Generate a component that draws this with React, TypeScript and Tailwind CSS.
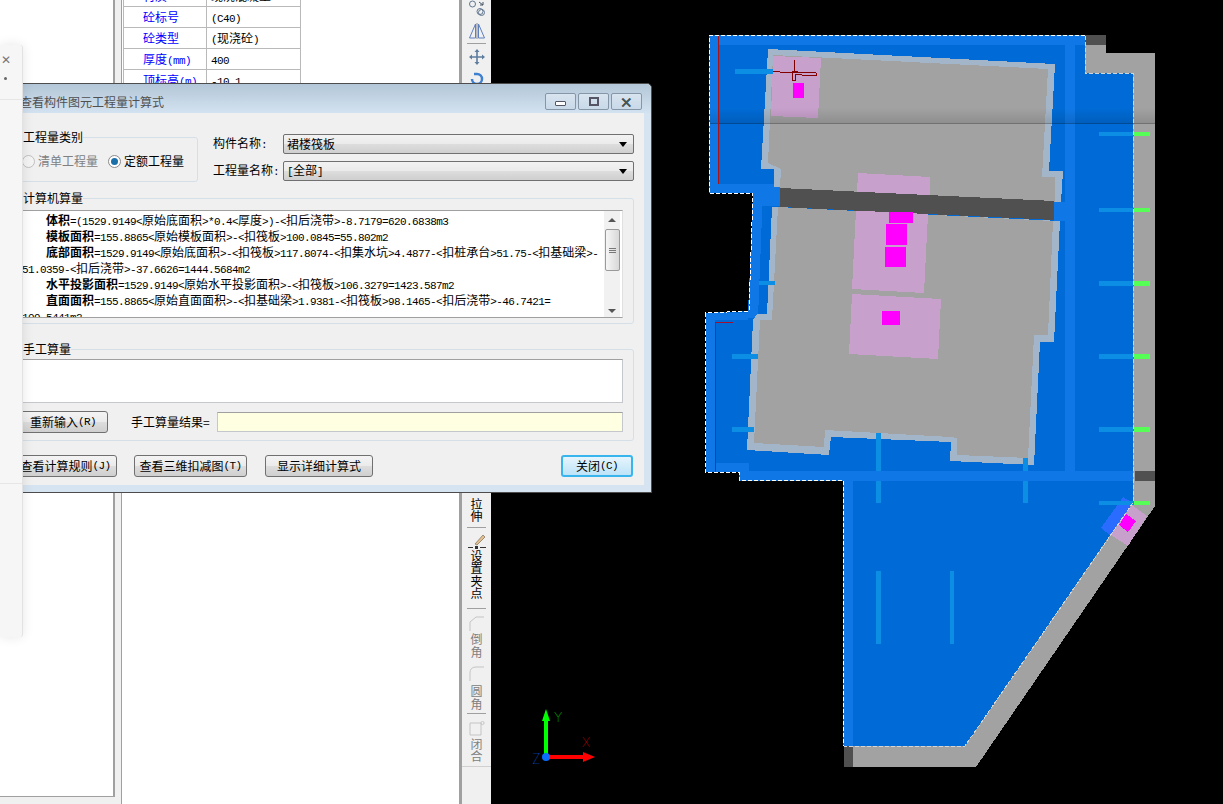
const cjk = "font-['Noto_Sans_CJK_SC',sans-serif]";

// digits and latin are half width in the original bitmap font
function Mixed({ text }: { text: string }) {
  return (
    <>
      {text.split(/([\x00-\x7f]+)/).map((part, i) =>
        /^[\x00-\x7f]+$/.test(part) ? (
          <span key={i} className="font-['Liberation_Mono',monospace] text-[11px] tracking-[-0.6px]">
            {part}
          </span>
        ) : (
          <span key={i}>{part}</span>
        ),
      )}
    </>
  );
}

function CalcLine({ label, text, indent = true }: { label?: string; text: string; indent?: boolean }) {
  return (
    <div className={indent ? 'h-4 whitespace-nowrap pl-6 leading-4' : 'h-4 whitespace-nowrap leading-4'}>
      {label && <b className="font-bold">{label}</b>}
      <Mixed text={text} />
    </div>
  );
}

function DialogButton({ children, width }: { children: React.ReactNode; width: string }) {
  return (
    <div
      className={`flex h-[22px] items-center justify-center rounded-[3px] border border-[#707070] bg-[linear-gradient(#f4f4f4_0%,#ebebeb_48%,#dddddd_52%,#cfcfcf_100%)] text-[12px] text-black ${width}`}
    >
      {children}
    </div>
  );
}

function ComboBox({ value }: { value: React.ReactNode }) {
  return (
    <div className="flex h-5 w-[351px] items-center justify-between rounded-[2px] border border-[#707070] bg-[linear-gradient(#f2f2f2_0%,#ebebeb_48%,#dddddd_52%,#cfcfcf_100%)] pl-[3px] pr-[6px] text-[12px] text-black">
      <span>{value}</span>
      <span className="h-0 w-0 border-x-[4px] border-t-[5px] border-x-transparent border-t-black" />
    </div>
  );
}

function WindowButton({ children }: { children: React.ReactNode }) {
  return (
    <div className="flex h-[17px] w-[31px] items-center justify-center rounded-[2px] border border-[#8496a8] bg-[linear-gradient(#d8e4ef,#c9d9e8)]">
      {children}
    </div>
  );
}

function PropRow({ label, value }: { label: React.ReactNode; value: React.ReactNode }) {
  return (
    <div className="grid h-[21px] grid-cols-[83px_94px] border-b border-[#b9b9b9] text-[12px] leading-[20px]">
      <div className="border-r border-[#b9b9b9] pl-[19px] text-[#0000ff]">{label}</div>
      <div className="pl-1 text-black">{value}</div>
    </div>
  );
}

function Sep() {
  return <div className="my-[2px] h-px w-[19px] shrink-0 bg-[#a0a0a0]" />;
}

function VText({ chars, muted }: { chars: string[]; muted?: boolean }) {
  return (
    <div className={`flex flex-col items-center text-[12px] leading-[12.4px] ${muted ? 'text-[#808080]' : 'text-black'}`}>
      {chars.map((c) => (
        <span key={c}>{c}</span>
      ))}
    </div>
  );
}

function Toolbar() {
  return (
    <div className="flex w-[29px] shrink-0 flex-col items-center bg-[#f0f0f0]">
      <svg width="18" height="18" viewBox="0 0 18 18" className="mt-0 shrink-0" fill="none" stroke="#5f7590">
        <circle cx="4.5" cy="4" r="3" />
        <circle cx="12" cy="11.5" r="3" />
        <circle cx="13.5" cy="12.5" r="3" />
        <path d="M11 2l4 3M15 2v3h-3" stroke="#456" />
      </svg>
      <svg width="18" height="16" viewBox="0 0 18 16" className="mt-[5px] shrink-0" fill="none" stroke="#5d7fc0">
        <path d="M7.5 1v14H1.5zM10.5 1v14h6z" />
        <path d="M9 0v16" stroke="#888" />
      </svg>
      <div className="mt-[4px] h-px w-[19px] shrink-0 bg-[#a0a0a0]" />
      <svg width="16" height="16" viewBox="0 0 16 16" className="mt-[5px] shrink-0" fill="#5e7d9e">
        <path d="M7.2 3h1.6v4.2H13V5.5L16 8l-3 2.5V8.8H8.8V13h1.7L8 16l-2.500-3h1.700V8.800H3v1.700L0 8l3-2.500v1.700h4.200V3H5.500L8 0l2.500 3z" />
      </svg>
      <svg width="14" height="16" viewBox="0 0 14 16" className="mt-[6px] shrink-0" fill="none" stroke="#3f7fd0" strokeWidth="2.500">
        <path d="M2 8a5 5 0 1 0 5-5H4" />
      </svg>
      <div className="h-[402px] shrink-0" />
      <div className="h-[4px] w-[13px] shrink-0 bg-[#5b7fa5]" />
      <div className="mt-[5px]">
        <VText chars={['拉', '伸']} />
      </div>
      <div className="mt-[2px]">
        <Sep />
      </div>
      <svg width="18" height="16" viewBox="0 0 18 16" className="mt-[3px] shrink-0" fill="none">
        <path d="M7 11l8-9 2 2-8 8z" fill="#e3c08d" stroke="#8a7b62" strokeWidth="0.800" />
        <path d="M0 14.500h5M12 14.500h6" stroke="#333" />
        <rect x="7" y="13" width="3" height="3" fill="#333" />
      </svg>
      <div className="mt-[1px]">
        <VText chars={['设', '置', '夹', '点']} />
      </div>
      <div className="mt-[7px]">
        <Sep />
      </div>
      <svg width="16" height="15" viewBox="0 0 16 15" className="mt-[5px] shrink-0" fill="none" stroke="#c4c4c4">
        <path d="M1 15V6M15 1H7M1 6l6-5" />
      </svg>
      <div className="mt-[2px]">
        <VText chars={['倒', '角']} muted />
      </div>
      <svg width="16" height="15" viewBox="0 0 16 15" className="mt-[8px] shrink-0" fill="none" stroke="#c4c4c4">
        <path d="M1 15V7Q1 1 7 1h8" />
      </svg>
      <div className="mt-[4px]">
        <VText chars={['圆', '角']} muted />
      </div>
      <div className="mt-[1px]">
        <Sep />
      </div>
      <svg width="16" height="15" viewBox="0 0 16 15" className="mt-[5px] shrink-0" fill="none" stroke="#c4c4c4">
        <path d="M1 2h11v12H1z" />
        <circle cx="13.500" cy="2" r="1.600" />
      </svg>
      <div className="mt-[2px]">
        <VText chars={['闭', '合']} muted />
      </div>
      <div className="mt-[3px] h-px w-full shrink-0 bg-[#d0d0d0]" />
    </div>
  );
}

function Drawing() {
  const lightBlue = '#0f78e6';
  const tick = '#0c8ee5';
  return (
    <svg viewBox="491 0 732 804" className="block h-full w-full" shapeRendering="crispEdges">
      <defs>
        <linearGradient id="shade" x1="0" y1="0" x2="0" y2="1">
          <stop offset="0" stopColor="#000" stopOpacity="0" />
          <stop offset="1" stopColor="#000" stopOpacity="0.12" />
        </linearGradient>
      </defs>

      {/* gray outer wall */}
      <polygon points="1085,35 1106,35 1106,53 1155,53 1155,506 976,767 844,767 844,740 1085,100" fill="#a2a2a2" />
      <rect x="1085" y="35" width="21" height="10" fill="#505050" />
      <rect x="1135" y="471" width="20" height="10" fill="#505050" />
      <rect x="844" y="746" width="9" height="21" fill="#505050" />

      {/* slab */}
      <polygon
        points="709,35 1085,35 1085,73 1133,73 1133,502 965,746 844,746 844,481 739,481 739,472 706,472 706,313 748,311 753,202 754,193 709,193"
        fill="#006bd6"
      />

      {/* thicker strips */}
      <g fill={lightBlue}>
        <rect x="709" y="35" width="376" height="10" />
        <rect x="709" y="35" width="10" height="158" />
        <rect x="709" y="184" width="71" height="9" />
        <rect x="754" y="187" width="26" height="19" />
        <polygon points="753,190 763,190 758,318 748,318" />
        <rect x="1065" y="45" width="10" height="426" />
        <rect x="1054" y="202" width="11" height="19" />
        <rect x="739" y="471" width="394" height="10" />
        <rect x="706" y="313" width="9" height="159" />
        <rect x="706" y="313" width="42" height="7" />
        <rect x="706" y="463" width="43" height="9" />
        <rect x="843" y="481" width="10" height="265" />
      </g>

      {/* rafts */}
      <polygon points="768,49 1055,64 1049,171 1063,171 1061,202 774,187 774,169 761,169" fill="#a3b6c9" />
      <polygon points="772,207 1060,221 1054,342 1040,342 1034,465 950,461 951,442 831,437 829,455 747,450 753,320 757,314 767,314" fill="#a3b6c9" />
      <polygon points="773,55 1048,69 1042,177 1055,177 1055,202 780,188 781,169 768,163" fill="#a2a2a2" />
      <polygon points="778,207 1053,221 1048,335 1034,335 1028,458 957,455 957,438 951,437 825,430 824,447 754,443 760,320 772,320" fill="#a2a2a2" />

      {/* pits */}
      <g fill="#c8a0cc">
        <polygon points="773,56 821,58 818,118 771,116" />
        <polygon points="858,173 930,177 930,197 857,193" />
        <polygon points="856,210 928,214 924,293 852,289" />
        <polygon points="852,294 941,299 938,359 849,354" />
        <polygon points="1132,505 1147,516 1128,546 1111,535" />
      </g>
      <polygon points="780,188 1054,201 1054,220 780,207" fill="#505050" />
      <g fill="#ff00ff">
        <rect x="793" y="83" width="11" height="15" />
        <rect x="889" y="212" width="24" height="11" />
        <rect x="886" y="224" width="21" height="21" />
        <rect x="885" y="247" width="21" height="20" />
        <rect x="882" y="311" width="18" height="14" />
      </g>
      <polygon points="1123,497 1133,503 1110,535 1101,528" fill="#2a6cff" />
      <polygon points="1126,514 1136,521 1128,532 1119,525" fill="#ff00ff" />

      {/* ticks */}
      <g fill={tick}>
        <rect x="735" y="69" width="38" height="5" />
        <rect x="759" y="281" width="16" height="4" />
        <rect x="732" y="354" width="26" height="5" />
        <rect x="732" y="427" width="22" height="5" />
        <rect x="876" y="433" width="5" height="38" />
        <rect x="876" y="481" width="5" height="22" />
        <rect x="1023" y="458" width="5" height="13" />
        <rect x="1023" y="481" width="5" height="22" />
        <rect x="876" y="571" width="5" height="73" />
        <rect x="950" y="571" width="4" height="73" />
        <rect x="1099" y="132" width="35" height="4" />
        <rect x="1099" y="208" width="35" height="4" />
        <rect x="1099" y="281" width="35" height="5" />
        <rect x="1099" y="354" width="35" height="5" />
        <rect x="1099" y="427" width="35" height="5" />
        <rect x="1099" y="501" width="35" height="4" />
      </g>
      <g fill="#55ff55">
        <rect x="1134" y="132" width="16" height="4" />
        <rect x="1134" y="208" width="16" height="4" />
        <rect x="1134" y="281" width="16" height="5" />
        <rect x="1134" y="354" width="16" height="5" />
        <rect x="1134" y="427" width="16" height="5" />
        <rect x="1134" y="501" width="16" height="4" />
      </g>

      {/* section shading */}
      <rect x="709" y="108" width="446" height="15" fill="url(#shade)" />
      <rect x="709" y="123" width="446" height="1" fill="#000" fillOpacity="0.3" />

      {/* selection outline */}
      <polyline
        points="1085,35.500 709.500,35.500 709.500,193.500 753,193.500 749,311 705.500,313 705.500,472 739,472 739,480.500 843.500,480.500 843.500,746"
        fill="none"
        stroke="#fff"
        strokeDasharray="4 2"
      />
      <polyline
        points="1085,35.500 1085,73.500 1133.500,73.500 1133.500,502 965,746 844,746"
        fill="none"
        stroke="#d5d5d5"
        strokeDasharray="4 2"
      />

      {/* red lines */}
      <path d="M718.500 36v148" stroke="#b01010" />
      <path d="M715.500 322v150M715 322.500h18" stroke="#a01030" />
      <path
        d="M773 71.500h7M780 72.500h36M816 72.500v3M802 75.500h14M795 74.500h7M795.500 74.500v6M792.500 71v10M792.500 80.500h3M794.500 60v11M792 71.500h6"
        stroke="#800000"
        fill="none"
      />

      {/* axes */}
      <g shapeRendering="auto">
        <rect x="544" y="721" width="4" height="36" fill="#00ff00" />
        <polygon points="546,709 550,721 542,721" fill="#00ff00" />
        <rect x="546" y="755" width="38" height="4" fill="#ff0000" />
        <polygon points="595,757 583,752 583,762" fill="#ff0000" />
        <circle cx="546" cy="757" r="4" fill="#0a6cff" />
        <text x="554" y="722" fontSize="13" fontWeight="100" fill="#00ff00" className="font-['Inter',sans-serif]">Y</text>
        <text x="582" y="747" fontSize="13" fontWeight="100" fill="#ff0000" className="font-['Inter',sans-serif]">X</text>
        <text x="532" y="764" fontSize="14" fontWeight="100" fill="#0a6cff" className="font-['Inter',sans-serif]">Z</text>
      </g>
    </svg>
  );
}

function CalcDialog() {
  return (
    <div className="absolute left-0 top-[83px] z-10 flex h-[410px] w-[652px] flex-col rounded-tr-[5px] border border-[#4d4d4d] bg-[#d6e4f1]">
      {/* TITLE */}
      <div className="flex h-[29px] shrink-0 items-start justify-between rounded-tr-[5px] bg-[linear-gradient(#b3c7d8,#d3e2f0)] pl-[19px] pr-[9px]">
        <span className="mt-[10px] text-[12px] leading-4 text-[#505050]">查看构件图元工程量计算式</span>
        <div className="mt-[9px] flex gap-[2px]">
          <WindowButton>
            <span className="mt-[4px] h-[5px] w-[11px] rounded-[1px] border border-[#556] bg-white" />
          </WindowButton>
          <WindowButton>
            <span className="h-[9px] w-[10px] border-2 border-[#556]" />
          </WindowButton>
          <WindowButton>
            <span className="text-[15px] font-bold leading-none text-[#455] [text-shadow:0_0_1px_#fff]">✕</span>
          </WindowButton>
        </div>
      </div>

      {/* BODY */}
      <div className="mr-[7px] flex h-[372px] shrink-0 flex-col bg-[#f0f0f0] pl-2 pr-[10px] pt-[17px] text-[12px] text-black">
        <div className="flex">
          <fieldset className="h-[52px] w-[190px] rounded-[3px] border border-[#d5dfe8]">
            <legend className="ml-[13px] h-[14px] text-[12px] leading-[14px]">工程量类别</legend>
            <div className="ml-[12px] mt-[8px] flex items-center">
              <span className="h-[13px] w-[13px] rounded-full border border-[#c0c0c0] bg-[#f4f4f4]" />
              <span className="ml-[3px] text-[#808080]">清单工程量</span>
              <span className="ml-[10px] flex h-[13px] w-[13px] items-center justify-center rounded-full border border-[#8a8a8a] bg-white">
                <span className="h-[7px] w-[7px] rounded-full bg-[#1a6fa8]" />
              </span>
              <span className="ml-[3px]">定额工程量</span>
            </div>
          </fieldset>
          <div className="ml-[15px] flex flex-col gap-[7px] pt-1">
            <div className="flex items-center">
              <span className="w-[70px]">
                构件名称<Mixed text=":" />
              </span>
              <ComboBox value="裙楼筏板" />
            </div>
            <div className="flex items-center">
              <span className="w-[70px]">
                工程量名称<Mixed text=":" />
              </span>
              <ComboBox value={<Mixed text="[全部]" />} />
            </div>
          </div>
        </div>

        <fieldset className="mt-[9px] h-[133px] rounded-[3px] border border-[#d5dfe8]">
          <legend className="ml-[13px] h-[14px] text-[12px] leading-[14px]">计算机算量</legend>
          <div className="relative ml-[5px] mr-[10px] mt-[5px] h-[108px] overflow-hidden border-y border-y-[#a0a0a0] border-r border-r-[#e0e0e0] bg-white pl-[7px] pt-[1px] text-[12px]">
            <CalcLine label="体积" text="=(1529.9149<原始底面积>*0.4<厚度>)-<扣后浇带>-8.7179=620.6838m3" />
            <CalcLine label="模板面积" text="=155.8865<原始模板面积>-<扣筏板>100.0845=55.802m2" />
            <CalcLine label="底部面积" text="=1529.9149<原始底面积>-<扣筏板>117.8074-<扣集水坑>4.4877-<扣桩承台>51.75-<扣基础梁>-" />
            <CalcLine indent={false} text="51.0359-<扣后浇带>-37.6626=1444.5684m2" />
            <CalcLine label="水平投影面积" text="=1529.9149<原始水平投影面积>-<扣筏板>106.3279=1423.587m2" />
            <CalcLine label="直面面积" text="=155.8865<原始直面面积>-<扣基础梁>1.9381-<扣筏板>98.1465-<扣后浇带>-46.7421=" />
            <CalcLine indent={false} text="109.5441m2" />
            {/* SCROLLBAR */}
            <div className="absolute bottom-0 right-[2px] top-0 flex w-4 flex-col items-center bg-[#f1f1f1]">
              <span className="mt-[7px] h-0 w-0 border-x-[4px] border-b-[4px] border-x-transparent border-b-[#555]" />
              <div className="mt-[7px] flex h-[42px] w-[15px] flex-col items-center justify-center gap-px rounded-[2px] border border-[#9a9a9a] bg-[linear-gradient(90deg,#f6f6f6,#d8d8d8)]">
                <span className="h-px w-[7px] bg-[#777]" />
                <span className="h-px w-[7px] bg-[#777]" />
                <span className="h-px w-[7px] bg-[#777]" />
              </div>
              <span className="mt-auto mb-[4px] h-0 w-0 border-x-[4px] border-t-[4px] border-x-transparent border-t-[#555]" />
            </div>
          </div>
        </fieldset>

        <fieldset className="mt-[18px] h-[99px] rounded-[3px] border border-[#d5dfe8]">
          <legend className="ml-[13px] h-[14px] text-[12px] leading-[14px]">手工算量</legend>
          <div className="ml-[5px] mr-[10px] mt-[3px] h-[44px] border border-[#c4c8cc] border-t-[#a0a0a0] bg-white" />
          <div className="ml-[8px] mr-[10px] mt-2 flex items-center">
            <DialogButton width="w-[90px]">
              重新输入<Mixed text=" (R)" />
            </DialogButton>
            <span className="ml-[23px] w-[86px]">手工算量结果=</span>
            <div className="h-[20px] flex-1 border border-[#c4c8cc] border-t-[#a0a0a0] bg-[#ffffe1]" />
          </div>
        </fieldset>

        <div className="ml-[5px] mt-[14px] flex gap-[17px]">
          <DialogButton width="w-[103px]">
            查看计算规则<Mixed text=" (J)" />
          </DialogButton>
          <DialogButton width="w-[113px]">
            查看三维扣减图<Mixed text=" (T)" />
          </DialogButton>
          <DialogButton width="ml-px w-[108px]">显示详细计算式</DialogButton>
          <div className="ml-auto mr-px flex h-[22px] w-[72px] items-center justify-center rounded-[3px] border-2 border-[#39b5ee] bg-[linear-gradient(#e6f5fd,#bde3f8)]">
            关闭<Mixed text=" (C)" />
          </div>
        </div>
      </div>
    </div>
  );
}

export default function App() {
  return (
    <div className={`relative flex h-[804px] w-[1223px] overflow-hidden bg-[#f0f0f0] ${cjk}`}>
      {/* LEFT TREE */}
      <div className="flex w-[121px] shrink-0 flex-col">
        <div className="flex h-[797px] shrink-0">
          <div className="w-[113px] border-b border-[#a0a0a0] bg-white" />
          <div className="w-[2px] bg-[#a0a0a0]" />
        </div>
      </div>
      <div className="w-px shrink-0 bg-[#a0a0a0]" />

      {/* PROPERTIES */}
      <div className="w-[337px] shrink-0 overflow-hidden bg-white">
        <div className="-mt-[14px] ml-px w-[178px] border-l border-r border-[#b9b9b9]">
          <PropRow label="材质" value="现浇混凝土" />
          <PropRow label="砼标号" value={<Mixed text="(C40)" />} />
          <PropRow label="砼类型" value={<Mixed text="(现浇砼)" />} />
          <PropRow label={<Mixed text="厚度(mm)" />} value={<Mixed text="400" />} />
          <PropRow label={<Mixed text="顶标高(m)" />} value={<Mixed text="-10.1" />} />
        </div>
      </div>
      <div className="w-[3px] shrink-0 bg-[#a0a0a0]" />

      <Toolbar />

      {/* CANVAS */}
      <div className="min-w-0 flex-1 bg-black">
        <Drawing />
      </div>

      <CalcDialog />

      {/* SIDE PANEL */}
      <div className="absolute left-0 top-[45px] z-20 flex h-[592px] w-[23px] flex-col rounded-r-[3px] border-r border-[#e2e2e2] bg-[#f6f6f6] shadow-[0_0_12px_rgba(0,0,0,0.1)]">
        <span className="mt-[6px] pl-[1px] text-[12px] leading-4 text-[#777]">✕</span>
        <span className="ml-1 mt-[10px] h-[3px] w-[3px] rounded-full bg-[#666]" />
        <div className="mt-[19px] h-px bg-[#e6e6e6]" />
        <div className="mt-[383px] h-px bg-[#e6e6e6]" />
      </div>
    </div>
  );
}
